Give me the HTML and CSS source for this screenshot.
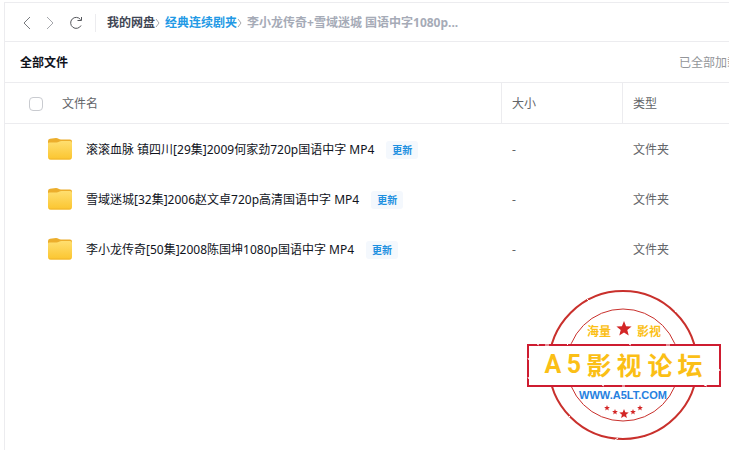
FILE: index.html
```html
<!DOCTYPE html>
<html lang="zh-CN">
<head>
<meta charset="utf-8">
<meta name="viewport" content="width=device-width, initial-scale=1">
<title>我的网盘</title>
<link rel="stylesheet" href="styles.css">
</head>
<body>
<svg class="defs" aria-hidden="true">
  <defs>
    <linearGradient id="folder-front" x1="0" y1="0" x2="0" y2="1">
      <stop offset="0" stop-color="#ffdf70"/>
      <stop offset="1" stop-color="#fbc52f"/>
    </linearGradient>
    <symbol id="folder" viewBox="0 0 24 22">
      <path fill="#ecae2c" d="M0 3Q0 1 2 .7L8 0Q9.500 0 10.500 .7Q11.500 1.400 13 1.400H22Q24 1.400 24 3.400V12H0Z"/>
      <path fill="url(#folder-front)" d="M0 5.500Q0 4.500 1.500 4.500H8.500Q10 4.500 11 3.800Q12 3 13.500 3H22Q24 3 24 5V19Q24 21.500 21.500 21.500H2.500Q0 21.500 0 19Z"/>
      <path fill="none" stroke="#f1b52c" d="M1 20.500Q1.500 21 2.500 21H21.500Q22.500 21 23 20.500"/>
    </symbol>
    <symbol id="star" viewBox="-10 -10 20 20">
      <path fill="#d32626" d="M0-10L2.600-3.300 9.500-3.100 4.100 1.300 5.900 8.100 0 4.300-5.900 8.100-4.100 1.300-9.500-3.100-2.600-3.300Z"/>
    </symbol>
  </defs>
</svg>
<main class="panel">
  <nav class="toolbar" aria-label="导航">
    <button class="tool" type="button" aria-label="后退"><svg width="8" height="14" viewBox="0 0 8 14"><path d="M7 1L1 7l6 6"/></svg></button>
    <button class="tool tool-off" type="button" aria-label="前进"><svg width="8" height="14" viewBox="0 0 8 14"><path d="M1 1l6 6-6 6"/></svg></button>
    <button class="tool tool-reload" type="button" aria-label="刷新"><svg width="14" height="14" viewBox="0 0 14 14"><path d="M11.500 3.500A5.500 5.500 0 1 0 12 9.500M12.500 1v3.500H8.500"/></svg></button>
    <ol class="crumbs">
      <li><a class="crumb" href="#">我的网盘</a><svg class="sep" width="5" height="8" viewBox="0 0 5 8"><path d="M1 0l3 4-3 4"/></svg></li>
      <li><a class="crumb crumb-active" href="#">经典连续剧夹</a><svg class="sep" width="5" height="8" viewBox="0 0 5 8"><path d="M1 0l3 4-3 4"/></svg></li>
      <li><span class="crumb crumb-current">李小龙传奇+雪域迷城 国语中字1080p...</span></li>
    </ol>
  </nav>
  <header class="heading">
    <h1>全部文件</h1>
    <span class="status">已全部加载</span>
  </header>
  <table class="files">
    <colgroup><col><col class="col-size"><col class="col-type"></colgroup>
    <thead>
      <tr>
        <th scope="col"><div class="name-head"><input type="checkbox" id="all" aria-label="全选"><label for="all">文件名</label></div></th>
        <th scope="col">大小</th>
        <th scope="col">类型</th>
      </tr>
    </thead>
    <tbody>
      <tr>
        <td><div class="name"><svg class="folder"><use href="#folder"/></svg><span>滚滚血脉 镇四川[29集]2009何家劲720p国语中字 MP4</span><span class="tag">更新</span></div></td>
        <td>-</td>
        <td>文件夹</td>
      </tr>
      <tr>
        <td><div class="name"><svg class="folder"><use href="#folder"/></svg><span>雪域迷城[32集]2006赵文卓720p高清国语中字 MP4</span><span class="tag">更新</span></div></td>
        <td>-</td>
        <td>文件夹</td>
      </tr>
      <tr>
        <td><div class="name"><svg class="folder"><use href="#folder"/></svg><span>李小龙传奇[50集]2008陈国坤1080p国语中字 MP4</span><span class="tag">更新</span></div></td>
        <td>-</td>
        <td>文件夹</td>
      </tr>
    </tbody>
  </table>
</main>
<svg class="stamp" viewBox="0 0 196 152" role="img" aria-label="A5影视论坛">
  <circle class="ring" cx="98" cy="76" r="74"/>
  <circle class="ring ring-inner" cx="98" cy="76" r="56"/>
  <path class="wear" d="M30 41l2-2M62 10l2 2M150 23l2-2M118 149l3 1M90 151l3-2M45 127l-2 2"/>
  <rect class="banner" x="3" y="56" width="192" height="41"/>
  <path class="wear" d="M12 55l2 1M20 56h4M42 55l1 1M104 55l2 1M141 56h4M3 69l1 2M3 88l1 2M77 96l2 1M97 97h3M179 96l3 1M194 80l1 2"/>
  <use href="#star" x="91" y="32" width="16" height="16"/>
  <text class="small" x="74" y="47">海量</text>
  <text class="small" x="124" y="47">影视</text>
  <g class="big">
    <text x="28" y="84">A</text><text x="49" y="84">5</text><text x="74" y="86">影</text><text x="104" y="86">视</text><text x="135" y="86">论</text><text x="165" y="86">坛</text>
  </g>
  <text class="site" x="98" y="110">WWW.A5LT.COM</text>
  <use href="#star" x="79" y="116" width="6" height="6"/>
  <use href="#star" x="87" y="120" width="6" height="6"/>
  <use href="#star" x="94" y="120" width="10" height="10"/>
  <use href="#star" x="105" y="120" width="6" height="6"/>
  <use href="#star" x="112" y="116" width="6" height="6"/>
</svg>
</body>
</html>
```

FILE: styles.css
```css
* { box-sizing: border-box; }

body {
  margin: 0;
  padding: 2px 0 0 4px;
  background: #fff;
  color: #10131c;
  font: 12px/18px "Noto Sans", "Noto Sans CJK SC", sans-serif;
  overflow: hidden;
}

.defs { position: absolute; width: 0; height: 0; }

.panel {
  min-height: calc(100vh - 2px);
  border-top: 1px solid #ececef;
  border-left: 1px solid #ececef;
}

.toolbar {
  display: flex;
  align-items: center;
  height: 39px;
  padding: 2px 0 0 18px;
  border-bottom: 1px solid #ececef;
}

.tool {
  display: flex;
  margin: 0 15px 0 0;
  padding: 0;
  border: 0;
  background: none;
}

.tool svg, .sep { fill: none; stroke: #77797e; }
.tool-off svg, .sep { stroke: #a5a7ac; }
.tool-reload { margin-right: 12px; }
.tool-reload svg { stroke: #55575c; }

.crumbs {
  display: flex;
  margin: 0;
  padding: 0 0 0 11px;
  border-left: 1px solid #ececef;
  list-style: none;
  white-space: nowrap;
}

.crumbs li { display: flex; align-items: center; margin-right: 5px; }

.crumb { color: #3f4654; font-weight: 700; text-decoration: none; }
.crumb-active { color: #2299e5; }
.crumb-current { color: #a6abb7; }

.heading {
  display: flex;
  align-items: center;
  justify-content: space-between;
  height: 41px;
  padding: 2px 0 0 15px;
  border-bottom: 1px solid #ececef;
}

h1 { margin: 0; font-size: 12px; font-weight: 700; }

.status {
  width: 50px;
  overflow: hidden;
  color: #939599;
  white-space: nowrap;
}

.files {
  width: 100%;
  border-collapse: separate;
  border-spacing: 0;
  table-layout: fixed;
}

.col-size { width: 121px; }
.col-type { width: 107px; }

th, td { padding: 2px 0 0 10px; color: #626468; text-align: left; font-weight: 400; }
th { height: 41px; border-bottom: 1px solid #ececef; }
th + th { border-left: 1px solid #ececef; }
td { height: 50px; }
td + td { padding-left: 11px; }

.name-head { display: flex; align-items: center; gap: 19px; padding-left: 14px; }

input {
  appearance: none;
  width: 14px;
  height: 14px;
  margin: 0;
  border: 1px solid #c9cbd0;
  border-radius: 4px;
}

.name {
  display: flex;
  align-items: center;
  padding-left: 33px;
  color: #10131c;
  white-space: nowrap;
}

.folder { width: 24px; height: 22px; margin: 0 14px 2px 0; }

.tag {
  margin-left: 12px;
  padding: 0 6px;
  border-radius: 3px;
  background: #f4f8fd;
  color: #1e90e0;
  font-size: 10px;
  font-weight: 700;
}

.stamp {
  position: absolute;
  top: 289px;
  right: 8px;
  width: 196px;
  height: 152px;
}

.ring { fill: none; stroke: #c9302c; stroke-width: 2; }
.ring-inner { stroke-width: 1; }
.banner { fill: #fff; stroke: #ce1c30; stroke-width: 2; }
.wear { fill: none; stroke: #fff; stroke-width: 1; }

.small, .big { fill: #fbbf16; font-family: Roboto, "Noto Sans CJK SC", sans-serif; font-weight: 700; text-anchor: middle; }
.small { font-size: 12px; }
.big { font-size: 25px; }

.site {
  fill: #2681e0;
  font: 700 11px "Liberation Sans", sans-serif;
  text-anchor: middle;
}
```
